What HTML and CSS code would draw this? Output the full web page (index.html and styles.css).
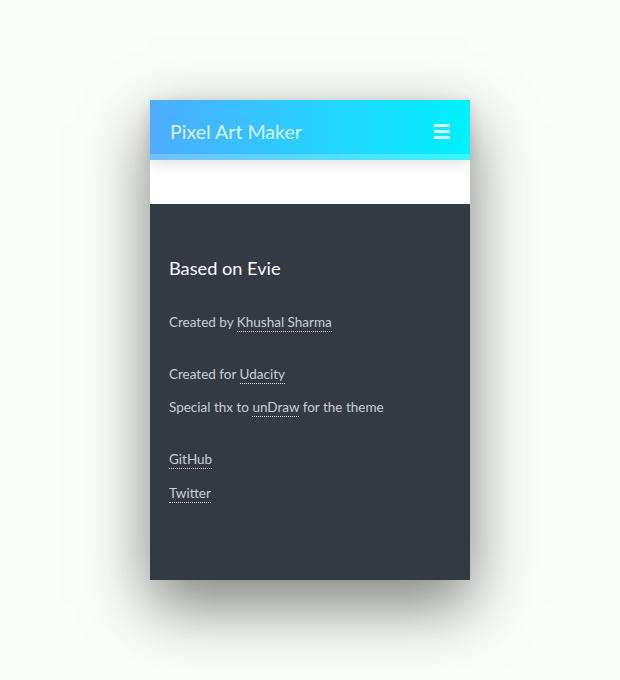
FILE: index.html
```html
<!DOCTYPE html>
<html lang="en">
<head>
<meta charset="utf-8">
<title>Pixel Art Maker</title>
<link rel="stylesheet" href="styles.css">
</head>
<body>
<div class="card">
  <header class="nav">
    <div class="nav-bar">
      <span class="brand">Pixel Art Maker</span>
      <span class="burger" aria-label="menu"><i></i><i></i><i></i></span>
    </div>
  </header>
  <div class="spacer"></div>
  <footer class="footer">
    <h2 class="footer-title">Based on Evie</h2>
    <p class="line">Created by <a class="link" href="#">Khushal Sharma</a></p>
    <p class="line gap">Created for <a class="link" href="#">Udacity</a></p>
    <p class="line">Special thx to <a class="link" href="#">unDraw</a> for the theme</p>
    <p class="line gap wide"><a class="link" href="#">GitHub</a></p>
    <p class="line"><a class="link" href="#">Twitter</a></p>
  </footer>
</div>
</body>
</html>
```
FILE: styles.css
```css
html, body {
  margin: 0;
  padding: 0;
}
body {
  background: #fbfdfb;
  font-family: Lato, "Open Sans", sans-serif;
  padding-top: 100px;
  height: 580px;
}
.card {
  width: 320px;
  margin: 0 auto;
  box-shadow: 0 25px 60px rgba(40, 45, 35, 0.6);
}
.nav {
  position: relative;
  z-index: 1;
  background: linear-gradient(to right, #4facfe 0%, #00f2fe 100%);
  box-shadow: 0 4px 14px rgba(0, 0, 0, 0.12);
}
.nav-bar {
  box-sizing: border-box;
  height: 60px;
  padding: 8px 20px 0;
  display: flex;
  align-items: center;
  justify-content: space-between;
  border-bottom: 6px solid rgba(255, 255, 255, 0.22);
}
.brand {
  font-size: 19.6px;
  color: rgba(255, 255, 255, 0.82);
}
.burger {
  width: 16px;
  display: flex;
  flex-direction: column;
  gap: 3px;
}
.burger i {
  display: block;
  height: 3px;
  background: rgba(255, 255, 255, 0.82);
}
.spacer {
  height: 44px;
  background: #fff;
}
.footer {
  background: #343a44;
  height: 376px;
  box-sizing: border-box;
  padding: 50px 19px 0;
  color: #c9cfd6;
}
.footer-title {
  margin: 0 0 30px;
  font-size: 18.2px;
  font-weight: 400;
  color: #fff;
  line-height: 28px;
}
.line {
  margin: 0 0 13px;
  font-size: 13.5px;
  line-height: 20px;
}
.line.gap {
  margin-top: 32px;
}
.line.wide {
  margin-bottom: 14px;
}
.link {
  color: #c9cfd6;
  text-decoration: none;
  border-bottom: 1px dotted #e6eaee;
  padding-bottom: 1px;
}
```
